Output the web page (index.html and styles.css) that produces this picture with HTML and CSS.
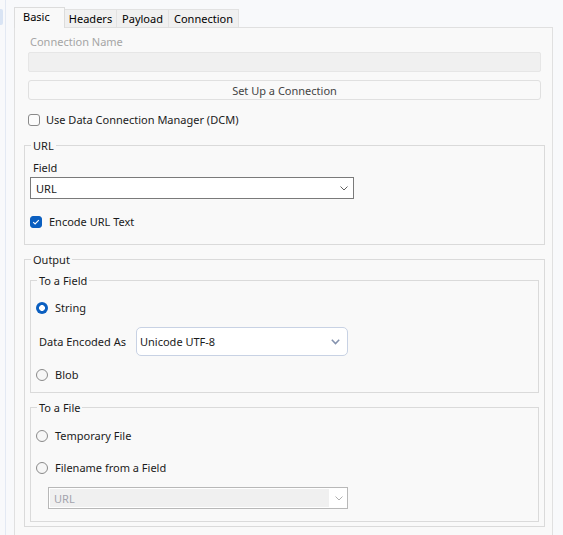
FILE: index.html
```html
<!DOCTYPE html>
<html>
<head>
<meta charset="utf-8">
<link rel="stylesheet" href="styles.css">
</head>
<body>
<div class="app">
  <div class="rail"><div class="rail-pill"></div></div>
  <div class="main">
    <div class="tabs">
      <div class="tab tab-active">Basic</div>
      <div class="tab">Headers</div>
      <div class="tab">Payload</div>
      <div class="tab">Connection</div>
    </div>
    <div class="panel">
      <div class="top">
        <div class="label-disabled">Connection Name</div>
        <div class="textbox"></div>
        <div class="button">Set Up a Connection</div>
        <div class="check-row dcm"><span class="checkbox"></span>Use Data Connection Manager (DCM)</div>
      </div>

      <fieldset class="group group-url">
        <legend>URL</legend>
        <div class="field-label">Field</div>
        <div class="combo combo-url">
          <span>URL</span>
          <svg class="chev" width="8" height="5" viewBox="0 0 8 5"><polyline points="0.5,0.5 4,4 7.5,0.5" fill="none" stroke="#606060" stroke-width="1"/></svg>
        </div>
        <div class="check-row encode">
          <span class="checkbox checked"><svg width="12" height="12" viewBox="0 0 12 12"><polyline points="3.2,6.2 5.1,8 8.8,4.2" fill="none" stroke="#ffffff" stroke-width="1.1"/></svg></span>Encode URL Text
        </div>
      </fieldset>

      <fieldset class="group group-output">
        <legend>Output</legend>
        <fieldset class="group sub group-field">
          <legend>To a Field</legend>
          <div class="radio-row first"><span class="radio selected"></span>String</div>
          <div class="encoded-row">
            <span class="encoded-label">Data Encoded As</span>
            <div class="combo combo-enc">
              <span>Unicode UTF-8</span>
              <svg class="chev" width="9" height="6" viewBox="0 0 9 6"><polyline points="0.8,0.8 4.5,4.6 8.2,0.8" fill="none" stroke="#8391ad" stroke-width="1.5"/></svg>
            </div>
          </div>
          <div class="radio-row blob"><span class="radio"></span>Blob</div>
        </fieldset>
        <fieldset class="group sub group-file">
          <legend>To a File</legend>
          <div class="radio-row first temp"><span class="radio"></span>Temporary File</div>
          <div class="radio-row filename"><span class="radio"></span>Filename from a Field</div>
          <div class="combo combo-disabled">
            <span class="combo-disabled-fill">URL</span>
            <svg class="chev" width="8" height="5" viewBox="0 0 8 5"><polyline points="0.5,0.5 4,4 7.5,0.5" fill="none" stroke="#b0b0b0" stroke-width="1"/></svg>
          </div>
        </fieldset>
      </fieldset>
    </div>
  </div>
</div>
</body>
</html>
```

FILE: styles.css
```css
html, body {
  margin: 0;
  padding: 0;
}
body {
  background: #f8f9fb;
  font-family: "Noto Sans", "Open Sans", sans-serif;
  font-size: 11px;
  line-height: 15px;
  color: #1b1b1b;
  height: 535px;
  overflow: hidden;
}
.app {
  display: flex;
  height: 535px;
}
.rail {
  width: 5px;
  border-right: 1px solid #e3e9f3;
  margin-right: 8px;
  flex: none;
}
.rail-pill {
  margin-top: 9px;
  width: 3px;
  height: 16px;
  background: #d9e4f4;
  border-radius: 0 2px 2px 0;
}
.main {
  width: 539px;
  display: flex;
  flex-direction: column;
  flex: none;
}
.tabs {
  height: 27px;
  display: flex;
  align-items: flex-end;
  flex: none;
}
.tab {
  box-sizing: border-box;
  height: 18px;
  padding: 1px 0 0;
  text-align: center;
  background: #f0f0f0;
  border: 1px solid #e2e2e2;
  border-bottom: none;
  border-left: none;
  color: #000;
  width: 52px;
}
.tab:nth-child(4) {
  width: 70px;
}
.tab-active {
  width: 51px;
  background: #f9f9f9;
  border-left: 1px solid #dcdcdc;
  border-top: 1px solid #dcdcdc;
  border-right: 1px solid #dcdcdc;
  padding-top: 1px;
  text-align: left;
  padding-left: 8px;
  margin-bottom: -1px;
  height: 21px;
  position: relative;
  z-index: 1;
}
.panel {
  flex: 1;
  box-sizing: border-box;
  background: #f9f9f9;
  border: 1px solid #e0e0e0;
  border-bottom: none;
  padding: 0 7px 0 9px;
}
.top {
  margin: 0 4px;
}
.label-disabled {
  margin-top: 6px;
  margin-left: 2px;
  color: #a5a5a5;
}
.textbox {
  margin-top: 3px;
  height: 20px;
  box-sizing: border-box;
  background: #f0f0f0;
  border: 1px solid #e6e6e6;
  border-radius: 2px;
}
.button {
  margin-top: 8px;
  height: 20px;
  box-sizing: border-box;
  border: 1px solid #e0e0e0;
  border-radius: 3px;
  background: #f9f9f9;
  display: flex;
  align-items: center;
  justify-content: center;
  color: #444;
}
.check-row {
  display: flex;
  align-items: center;
  height: 15px;
}
.dcm {
  margin-top: 12px;
}
.dcm .checkbox {
  margin-right: 6px;
}
.checkbox {
  box-sizing: border-box;
  width: 12px;
  height: 12px;
  border: 1px solid #8a8a8a;
  border-radius: 3px;
  background: #fcfcfc;
  margin-right: 7px;
  flex: none;
  display: flex;
}
.checkbox.checked {
  background: #0b5fc0;
  border-color: #0b5fc0;
}
.checkbox.checked svg {
  margin: -1px;
}
.group {
  margin: 0;
  min-width: 0;
  border: 1px solid #dadada;
  padding: 0 5px;
}
.group legend {
  padding: 0 2px;
  margin-left: 1px;
  line-height: 15px;
}
.group-url {
  margin-top: 11px;
  padding-bottom: 15px;
}
.field-label {
  margin-top: 7px;
  margin-left: 3px;
}
.combo {
  box-sizing: border-box;
  display: flex;
  align-items: center;
  background: #fff;
}
.combo span {
  flex: 1;
}
.combo-url {
  margin-top: 2px;
  width: 324px;
  height: 22px;
  border: 1px solid #7a7a7a;
  padding: 0 5px 0 5px;
}
.encode {
  margin-top: 15px;
}
.group-output {
  margin-top: 7px;
  padding-bottom: 4px;
}
.sub {
  margin-top: 6px;
}
.group-field {
  padding-bottom: 10px;
}
.radio-row {
  display: flex;
  align-items: center;
  height: 15px;
}
.radio-row.first {
  margin-top: 12px;
}
.radio-row.temp {
  margin-top: 13px;
}
.radio {
  box-sizing: border-box;
  width: 12px;
  height: 12px;
  border-radius: 50%;
  border: 1px solid #8a8a8a;
  background: #f6f6f6;
  margin-right: 7px;
  flex: none;
}
.radio.selected {
  border: none;
  background: radial-gradient(circle, #ffffff 0, #ffffff 2.6px, #0b5fc0 3.2px);
}
.encoded-row {
  margin-top: 12px;
  display: flex;
  align-items: center;
  padding-left: 3px;
}
.encoded-label {
  width: 97px;
  flex: none;
}
.combo-enc {
  width: 212px;
  height: 29px;
  border: 1px solid #c8d2e4;
  border-radius: 5px;
  padding: 0 7px 0 3px;
}
.blob {
  margin-top: 11px;
}
.group-file {
  margin-top: 7px;
  padding-bottom: 12px;
}
.filename {
  margin-top: 17px;
}
.combo-disabled {
  margin-top: 12px;
  margin-left: 12px;
  width: 300px;
  height: 22px;
  border: 1px solid #b8b8b8;
  padding: 1px 4px 1px 1px;
}
.combo-disabled .combo-disabled-fill {
  align-self: stretch;
  background: #f0f0f0;
  color: #a3a3ad;
  padding-left: 4px;
  display: flex;
  align-items: center;
  margin-right: 6px;
}
```
